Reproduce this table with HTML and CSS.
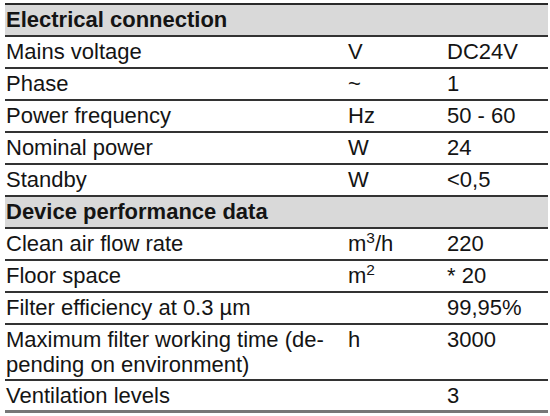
FILE: index.html
```html
<!DOCTYPE html>
<html>
<head>
<meta charset="utf-8">
<link rel="stylesheet" href="styles.css">
</head>
<body>
<div class="spec">
  <div class="row head"><div class="c1">Electrical connection</div><div class="c2"></div><div class="c3"></div></div>
  <div class="row"><div class="c1">Mains voltage</div><div class="c2">V</div><div class="c3">DC24V</div></div>
  <div class="row"><div class="c1">Phase</div><div class="c2">~</div><div class="c3">1</div></div>
  <div class="row"><div class="c1">Power frequency</div><div class="c2">Hz</div><div class="c3">50 - 60</div></div>
  <div class="row"><div class="c1">Nominal power</div><div class="c2">W</div><div class="c3">24</div></div>
  <div class="row"><div class="c1">Standby</div><div class="c2">W</div><div class="c3">&lt;0,5</div></div>
  <div class="row head"><div class="c1">Device performance data</div><div class="c2"></div><div class="c3"></div></div>
  <div class="row"><div class="c1">Clean air flow rate</div><div class="c2">m<sup>3</sup>/h</div><div class="c3">220</div></div>
  <div class="row"><div class="c1">Floor space</div><div class="c2">m<sup>2</sup></div><div class="c3">* 20</div></div>
  <div class="row"><div class="c1">Filter efficiency at 0.3 µm</div><div class="c2"></div><div class="c3">99,95%</div></div>
  <div class="row tall"><div class="c1">Maximum filter working time (de-<br>pending on environment)</div><div class="c2">h</div><div class="c3">3000</div></div>
  <div class="row last"><div class="c1">Ventilation levels</div><div class="c2"></div><div class="c3">3</div></div>
</div>
</body>
</html>
```
FILE: styles.css
```css
html, body {
  margin: 0;
  padding: 0;
  background: #ffffff;
}
body {
  font-family: "Liberation Sans", Arial, sans-serif;
  color: #141414;
}
.spec {
  margin: 3px 0 0 5px;
  width: 543px;
  border-top: 2px solid #2a2a2a;
}
.row {
  display: grid;
  grid-template-columns: 343px 99px 1fr;
  height: 32px;
  box-sizing: border-box;
  border-bottom: 2px solid #333333;
  font-size: 22px;
  line-height: 25px;
  padding-top: 2px;
}
.row.tall {
  height: 56px;
}
.row.last {
  border-bottom: 3px solid #777777;
}
.row.head {
  background: #d9d9d9;
  font-weight: bold;
}
.c1 {
  padding-left: 1px;
  white-space: nowrap;
}
sup {
  font-size: 15.5px;
  line-height: 0;
  vertical-align: 8px;
}
```
